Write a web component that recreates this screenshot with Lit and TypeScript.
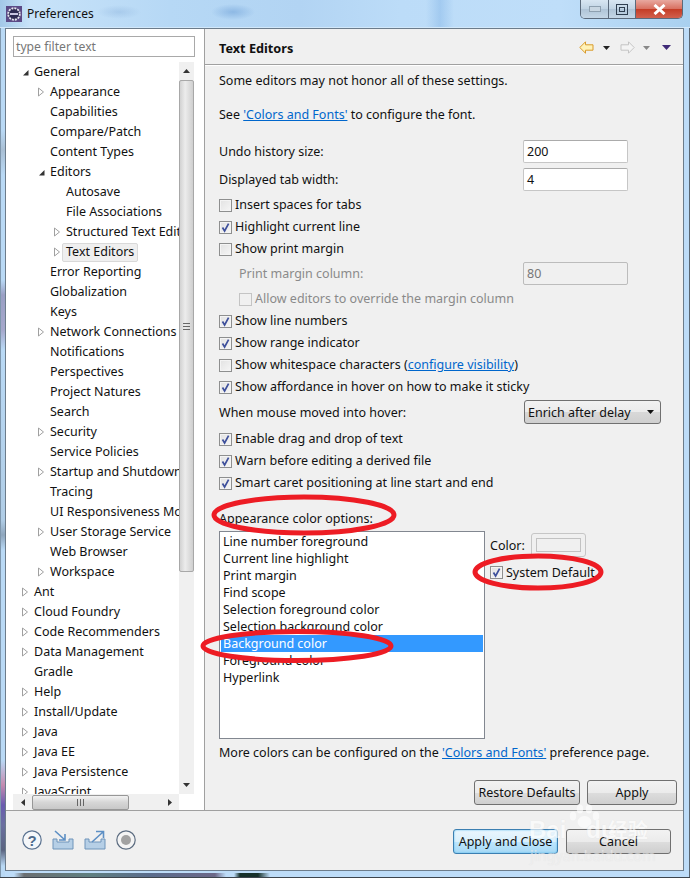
import { LitElement, html, css, svg } from "lit";
import { customElement } from "lit/decorators.js";

type Node = [string, number, "o" | "c" | ""];
const TREE: Node[] = [
  ["General", 0, "o"], ["Appearance", 1, "c"], ["Capabilities", 1, ""], ["Compare/Patch", 1, ""],
  ["Content Types", 1, ""], ["Editors", 1, "o"], ["Autosave", 2, ""], ["File Associations", 2, ""],
  ["Structured Text Editors", 2, "c"], ["Text Editors", 2, "c"], ["Error Reporting", 1, ""],
  ["Globalization", 1, ""], ["Keys", 1, ""], ["Network Connections", 1, "c"], ["Notifications", 1, ""],
  ["Perspectives", 1, ""], ["Project Natures", 1, ""], ["Search", 1, ""], ["Security", 1, "c"],
  ["Service Policies", 1, ""], ["Startup and Shutdown", 1, "c"], ["Tracing", 1, ""],
  ["UI Responsiveness Monitoring", 1, ""], ["User Storage Service", 1, "c"], ["Web Browser", 1, ""],
  ["Workspace", 1, "c"], ["Ant", 0, "c"], ["Cloud Foundry", 0, "c"], ["Code Recommenders", 0, "c"],
  ["Data Management", 0, "c"], ["Gradle", 0, ""], ["Help", 0, "c"], ["Install/Update", 0, "c"],
  ["Java", 0, "c"], ["Java EE", 0, "c"], ["Java Persistence", 0, "c"], ["JavaScript", 0, "c"],
];
const COLORS = ["Line number foreground", "Current line highlight", "Print margin", "Find scope",
  "Selection foreground color", "Selection background color", "Background color", "Foreground color", "Hyperlink"];

const cb = (checked: boolean, disabled = false) => html`<span class="cb ${disabled ? "dis" : ""}">${checked
  ? html`<svg width="11" height="11" viewBox="0 0 11 11"><path d="M2.5 5.5 L4.6 9 L8.6 1.6" fill="none" stroke="#3d4f9b" stroke-width="1.7"/></svg>` : ""}</span>`;

const check = (label: unknown, checked: boolean) => html`<div class="row chk">${cb(checked)}<span>${label}</span></div>`;

@customElement("app-root")
export class AppRoot extends LitElement {
  static styles = css`
    :host { display: block; width: 690px; height: 878px; position: relative; overflow: hidden;
      font-family: "Noto Sans", "Noto Sans CJK SC", sans-serif; font-size: 12.5px; color: #111;
      background: #b4d6f4; }
    * { box-sizing: border-box; }
    .frame { width: 690px; height: 878px; display: flex; flex-direction: column;
      box-shadow: inset -1px 0 #5a6672, inset 1px 0 #7f97ad;
      background:
        linear-gradient(180deg, #b9d9f5 0, #b9d9f5 130px, #a9bfd4 150px, #b9d9f5 175px, #b9d9f5 280px, #9a9fc4 295px, #a6a8cc 330px, #b9d9f5 350px, #b0cde6 520px, #8fa6bd 535px, #b9d9f5 550px, #b9d9f5 760px, #c48bb0 785px, #6a5cb0 805px, #6a6fa0 825px, #5a6480 850px, #b9d9f5 866px) left top / 5px 100% no-repeat,
        #bddcf8; }
    .titlebar { height: 28px; flex: none; display: flex; align-items: flex-start; position: relative;
      border-bottom: 1px solid #d2e8fa;
      background:
        radial-gradient(ellipse 22px 8px at 233px 12px, rgba(110,160,215,.55), transparent),
        radial-gradient(ellipse 22px 7px at 119px 12px, rgba(130,170,215,.35), transparent),
        linear-gradient(90deg, transparent 426px, rgba(130,180,230,.45) 440px, transparent 454px),
        linear-gradient(90deg, #a3c8e8 0, #c8e3f9 30px, #b6d8f5 170px, #b2d4f3 300px, #bcdcf8 400px, #bfdef9 560px, #a9d0ef 100%); }
    .ticon { margin: 6px 0 0 6px; }
    .ttext { margin: 5px 0 0 5px; line-height: 18px; font-size: 12px; color: #111; }
    .winbtns { margin-left: auto; margin-right: 7px; display: flex; height: 19px; border: 1px solid #5b6a7c;
      border-top: none; border-radius: 0 0 5px 5px; overflow: hidden; }
    .wb { height: 18px; display: flex; align-items: center; justify-content: center;
      background: linear-gradient(#d8e6f2, #c0d3e4 50%, #afc4d7 51%, #c4d6e6); border-right: 1px solid #5b6a7c; }
    .wb.min { width: 28px; } .wb.max { width: 27px; }
    .wb.close { width: 46px; border-right: none; background: linear-gradient(#e8a89f, #d86f5f 50%, #c43c26 51%, #d2604d); }
    .client { flex: none; height: 843px; margin-left: 5px; width: 679px; border: 1px solid #6c7c8b;
      background: #f0f0f0; display: flex; flex-direction: column; }
    .main { flex: none; height: 782px; display: flex; border-bottom: 1px solid #a0a0a0; }
    .left { flex: none; width: 199px; background: #fff; border-right: 1px solid #a0a0a0; padding: 7px 10px 0 7px;
      display: flex; flex-direction: column; }
    .filter { flex: none; height: 21px; width: 182px; border: 1px solid #a9a9a9; color: #777; line-height: 19px; padding-left: 2px; font-size: 12.2px; background: #fff; }
    .treebox { flex: none; margin-top: 5px; width: 182px; height: 748px; display: grid; grid-template-columns: 166px 16px; grid-template-rows: 732px 16px; }
    .tree { overflow: hidden; }
    .tn { height: 20px; line-height: 20px; white-space: nowrap; position: relative; display: flex; align-items: center; }
    .tn .arrow { width: 10px; flex: none; display: flex; align-items: center; justify-content: center; margin-right: 4px; }
    .l0 { padding-left: 7px; } .l1 { padding-left: 23px; } .l2 { padding-left: 39px; }
    .sel { background: #efefef; border: 1px solid #d9d9d9; border-radius: 2px; padding: 0 3px; margin-left: -4px; line-height: 16px; height: 19px; }
    .vbar { background: #f0f0f0; display: flex; flex-direction: column; width: 15px; position: relative; }
    .vbtn { height: 18px; flex: none; display: flex; align-items: center; justify-content: center; }
    .vthumb { flex: none; height: 492px; background: linear-gradient(90deg, #d2d2d2, #ececec 40%, #cfcfcf); border: 1px solid #a8a8a8; border-radius: 2px; display: flex; align-items: center; justify-content: center; }
    .vsp { flex: 1; }
    .hbar { background: #f0f0f0; display: flex; align-items: center; height: 16px; }
    .hbtn { width: 19px; flex: none; display: flex; align-items: center; justify-content: center; }
    .hthumb { width: 97px; height: 15px; flex: none; background: linear-gradient(#f2f2f2, #d6d6d6 50%, #c8c8c8); border: 1px solid #979797; border-radius: 2px; display: flex; align-items: center; justify-content: center; }
    .hsp { flex: 1; }
    .corner { background: #fff; }
    .right { flex: 1; min-width: 0; display: flex; flex-direction: column; }
    .head { flex: none; height: 36px; display: flex; align-items: center; padding-left: 14px; border-bottom: 1px solid #a0a0a0; box-shadow: 0 1px 0 #fff; }
    .head b { font-weight: 700; font-size: 12.7px; margin-top: 3px; }
    .tools { margin-left: auto; margin-right: 12px; margin-top: 2px; display: flex; align-items: center; }
    .body { flex: 1; padding: 5px 0 0 14px; display: flex; flex-direction: column; }
    .row { height: 22px; line-height: 22px; display: flex; align-items: center; white-space: nowrap; }
    .chk { gap: 3px; }
    .cb { width: 13px; height: 13px; flex: none; border: 1px solid #8e8f8f; background: linear-gradient(135deg, #e2e2e2, #f6f6f6); box-shadow: inset 0 0 0 1px #f4f4f4; display: inline-flex; align-items: center; justify-content: center; }
    .cb.dis { border-color: #c4c4c4; background: #f0f0f0; box-shadow: none; }
    .see { margin-top: 12px; }
    a { color: #0066cc; text-decoration: underline; }
    .field { height: 23px; display: flex; align-items: center; }
    .field .sp { flex: 1; }
    .input { flex: none; width: 105px; margin-right: 55px; height: 23px; background: #fff; border: 1px solid #c6c6c6; border-top-color: #ababab; border-radius: 2px; line-height: 21px; padding-left: 3px; }
    .f1 { margin-top: 14px; } .f2 { margin-top: 5px; margin-bottom: 3px; }
    .disrow { height: 28px; margin-top: -1px; margin-bottom: 1px; padding-left: 20px; display: flex; align-items: center; color: #8a8a8a; }
    .disrow .sp { flex: 1; }
    .input.dis { background: #f0f0f0; color: #777; border: 1px solid #bcbcbc; border-radius: 2px; }
    .allow { padding-left: 20px; color: #8a8a8a; }
    .combo { height: 30px; margin-top: -1px; margin-bottom: 1px; display: flex; align-items: center; }
    .combo .sp { flex: 1; }
    .select { flex: none; width: 137px; margin-right: 22px; height: 24px; border: 1px solid #707070; border-radius: 3px; background: linear-gradient(#f2f2f2, #ebebeb 50%, #d8d8d8 51%, #cfcfcf); display: flex; align-items: center; padding: 0 6px 0 3px; }
    .select svg { margin-left: auto; }
    .appear { margin-top: 14px; }
    .colors { margin-top: 1px; display: flex; height: 208px; }
    .list { flex: none; width: 266px; height: 208px; background: #fff; border: 1px solid #828790; padding: 1px 1px 0; overflow: hidden; }
    .li { height: 17px; line-height: 17px; padding-left: 2px; white-space: nowrap; }
    .li.on { background: #3399ff; color: #fff; }
    .cside { margin-left: 5px; display: flex; flex-direction: column; }
    .colrow { display: flex; align-items: center; gap: 6px; height: 25px; margin-top: 1px; }
    .colrow span { padding-top: 1px; }
    .swatch { width: 55px; height: 24px; border: 1px solid #c6c6c6; border-radius: 3px; background: #f0f0f0; display: flex; align-items: center; justify-content: center; }
    .swatch i { display: block; width: 45px; height: 14px; background: #f0f0f0; border: 1px solid #c2c2c2; }
    .sysdef { margin-top: 4px; height: 22px; display: flex; align-items: center; gap: 3px; }
    .more { margin-top: 3px; height: 22px; line-height: 22px; }
    .foot { margin-top: 16px; margin-right: 6px; display: flex; justify-content: flex-end; gap: 7px; }
    .btn { height: 25px; display: flex; align-items: center; justify-content: center; border: 1px solid #707070; border-radius: 3px; background: linear-gradient(#f2f2f2, #ebebeb 50%, #dddddd 51%, #cfcfcf); }
    .w106 { width: 106px; } .w90 { width: 90px; } .w105 { width: 105px; }
    .bottom { flex: 1; display: flex; align-items: flex-start; padding: 18px 12px 0 0; }
    .icons { display: flex; gap: 10px; padding-left: 16px; margin-top: 1px; align-items: center; }
    .bsp { flex: 1; }
    .btns { display: flex; gap: 8px; }
    .btn.def { border-color: #3c7fb1; background: linear-gradient(#eaf6fd, #d9f0fc 50%, #bee6fd 51%, #a7d9f5); box-shadow: 0 0 2px #4ab8ef inset; }
    .edge { flex: 1; margin-top: 1px; border-bottom: 1px solid #3d444c;
      background:
        linear-gradient(90deg, transparent 14px, #6b6f72 24px, #5f7f80 90px, #5a6c8c 150px, #6c6888 215px, transparent 226px, transparent 234px, #16302a 240px, #16302a 258px, transparent 270px) left 0 top 1px / 100% 4px no-repeat; }
    .marks { position: absolute; left: 0; top: 0; pointer-events: none; }
    .wm { position: absolute; left: 527px; top: 808px; width: 170px; height: 70px; color: #fff; opacity: .62; pointer-events: none; text-shadow: 0 0 1px #ddd; }
    .wm .baidu { position: absolute; left: 2px; top: 8px; font: 700 24px "Liberation Sans", sans-serif; }
    .wm .jy { position: absolute; left: 81px; top: 9px; font: 700 20px "Noto Sans CJK SC", sans-serif; line-height: 26px; }
    .wm .url { position: absolute; left: 3px; top: 37px; font: 14.5px "Noto Sans", sans-serif; color: #eee; }
    .wm svg { position: absolute; left: 42px; top: -4px; }
  `;

  private arrow(k: string) {
    if (k === "o") return html`<svg width="7" height="7" viewBox="0 0 7 7"><path d="M6.5 1 V6.5 H1 Z" fill="#333"/></svg>`;
    if (k === "c") return html`<svg width="6" height="10" viewBox="0 0 6 10"><path d="M.5 1 L5.5 5 L.5 9 Z" fill="#fff" stroke="#a0a0a0"/></svg>`;
    return "";
  }

  render() {
    return html`
    <div class="frame">
      <div class="titlebar">
        <svg class="ticon" width="16" height="16" viewBox="0 0 16 16"><rect width="16" height="16" fill="#5b4a86"/><circle cx="8" cy="8" r="5.8" fill="#2e2a52" stroke="#e6e6ee" stroke-width="1.8" stroke-dasharray="2 1"/><rect x="4" y="7" width="8" height="2" fill="#c8c4e0"/></svg>
        <span class="ttext">Preferences</span>
        <div class="winbtns">
          <div class="wb min"><svg width="12" height="6"><rect x=".5" y=".5" width="11" height="5" fill="#c8d6e2" stroke="#8ea0b0"/></svg></div>
          <div class="wb max"><svg width="12" height="11"><rect x=".5" y=".5" width="11" height="10" fill="none" stroke="#2f3e50"/><rect x="3.5" y="3.5" width="5" height="4" fill="none" stroke="#2f3e50"/></svg></div>
          <div class="wb close"><svg width="13" height="11" viewBox="0 0 13 11"><path d="M1.5 1 L11.5 10 M11.5 1 L1.5 10" stroke="#fff" stroke-width="3"/></svg></div>
        </div>
      </div>
      <div class="client">
        <div class="main">
          <div class="left">
            <div class="filter">type filter text</div>
            <div class="treebox">
              <div class="tree">
                ${TREE.map(([t, l, k]) => html`<div class="tn ${"l" + l}"><span class="arrow">${this.arrow(k)}</span><span class="${t === "Text Editors" ? "sel" : ""}">${t}</span></div>`)}
              </div>
              <div class="vbar">
                <div class="vbtn"><svg width="7" height="4"><path d="M0 4 L3.5 0 L7 4 Z" fill="#333"/></svg></div>
                <div class="vthumb"><svg width="7" height="7"><path d="M0 .5 H7 M0 3.5 H7 M0 6.5 H7" stroke="#666"/></svg></div>
                <div class="vsp"></div>
                <div class="vbtn"><svg width="7" height="4"><path d="M0 0 L3.5 4 L7 0 Z" fill="#333"/></svg></div>
              </div>
              <div class="hbar">
                <div class="hbtn"><svg width="4" height="7"><path d="M4 0 L0 3.5 L4 7 Z" fill="#333"/></svg></div>
                <div class="hthumb"><svg width="7" height="7"><path d="M.5 0 V7 M3.5 0 V7 M6.5 0 V7" stroke="#666"/></svg></div>
                <div class="hsp"></div>
                <div class="hbtn"><svg width="4" height="7"><path d="M0 0 L4 3.5 L0 7 Z" fill="#333"/></svg></div>
              </div>
              <div class="corner"></div>
            </div>
          </div>
          <div class="right">
            <div class="head"><b>Text Editors</b>
              <div class="tools">
                <svg width="15" height="13" viewBox="0 0 15 13"><path d="M.8 6.5 L6.5 .8 V3.8 H14 V9.2 H6.5 V12.2 Z" fill="#fff2b8" stroke="#d89a2c"/></svg>
                <svg style="margin-left:9px" width="7" height="4"><path d="M0 0 H7 L3.5 4 Z" fill="#222"/></svg>
                <svg style="margin-left:10px" width="15" height="13" viewBox="0 0 15 13"><path d="M14.2 6.5 L8.5 .8 V3.8 H1 V9.2 H8.5 V12.2 Z" fill="#f4f4f4" stroke="#c4c4c4"/></svg>
                <svg style="margin-left:8px" width="7" height="4"><path d="M0 0 H7 L3.5 4 Z" fill="#888"/></svg>
                <svg style="margin-left:12px" width="9" height="5"><path d="M0 0 H9 L4.5 5 Z" fill="#3f2a78"/></svg>
              </div>
            </div>
            <div class="body">
              <div class="row">Some editors may not honor all of these settings.</div>
              <div class="row see">See&nbsp;<a>'Colors and Fonts'</a>&nbsp;to configure the font.</div>
              <div class="field f1"><span>Undo history size:</span><span class="sp"></span><div class="input">200</div></div>
              <div class="field f2"><span>Displayed tab width:</span><span class="sp"></span><div class="input">4</div></div>
              ${check("Insert spaces for tabs", false)}
              ${check("Highlight current line", true)}
              ${check("Show print margin", false)}
              <div class="disrow"><span>Print margin column:</span><span class="sp"></span><div class="input dis">80</div></div>
              <div class="row chk allow">${cb(false, true)}<span>Allow editors to override the margin column</span></div>
              ${check("Show line numbers", true)}
              ${check("Show range indicator", true)}
              ${check(html`Show whitespace characters (<a>configure visibility</a>)`, false)}
              ${check("Show affordance in hover on how to make it sticky", true)}
              <div class="combo"><span>When mouse moved into hover:</span><span class="sp"></span>
                <div class="select">Enrich after delay<svg width="7" height="4"><path d="M0 0 H7 L3.5 4 Z" fill="#111"/></svg></div></div>
              ${check("Enable drag and drop of text", true)}
              ${check("Warn before editing a derived file", true)}
              ${check("Smart caret positioning at line start and end", true)}
              <div class="row appear">Appearance color options:</div>
              <div class="colors">
                <div class="list">${COLORS.map(c => html`<div class="li ${c === "Background color" ? "on" : ""}">${c}</div>`)}</div>
                <div class="cside">
                  <div class="colrow"><span>Color:</span><div class="swatch"><i></i></div></div>
                  <div class="sysdef">${cb(true)}<span>System Default</span></div>
                </div>
              </div>
              <div class="more">More colors can be configured on the <a>'Colors and Fonts'</a> preference page.</div>
              <div class="foot"><div class="btn w106">Restore Defaults</div><div class="btn w90">Apply</div></div>
            </div>
          </div>
        </div>
        <div class="bottom">
          <div class="icons">
            <svg width="20" height="20" viewBox="0 0 20 20"><circle cx="10" cy="10" r="9.2" fill="#f4f7fa" stroke="#5a7290" stroke-width="1.2"/><text x="10" y="15.5" text-anchor="middle" font-family="Liberation Sans" font-weight="700" font-size="15" fill="#4d6a8c">?</text></svg>
            <svg width="22" height="20" viewBox="0 0 22 20"><path d="M1 9 V19 H21 V9 H17 V12 H5 V9 Z" fill="#b6cfe6" stroke="#6f94ba"/><path d="M3 1 L13 10 M13 4 V10 H7" fill="none" stroke="#5d8fc4" stroke-width="1.6"/></svg>
            <svg width="22" height="20" viewBox="0 0 22 20"><path d="M1 9 V19 H21 V9 H17 V12 H5 V9 Z" fill="#b6cfe6" stroke="#6f94ba"/><path d="M8 12 L19 2 M12 1.5 H19.5 V8" fill="none" stroke="#5d8fc4" stroke-width="1.6"/></svg>
            <svg width="20" height="20" viewBox="0 0 20 20"><circle cx="10" cy="10" r="9.2" fill="#f4f4f4" stroke="#5c6c80" stroke-width="1.2"/><circle cx="10" cy="10" r="5" fill="#a2a2a2"/></svg>
          </div>
          <span class="bsp"></span>
          <div class="btns"><div class="btn def w105">Apply and Close</div><div class="btn w105">Cancel</div></div>
        </div>
      </div>
      <div class="edge"></div>
    </div>
    <svg class="marks" width="690" height="878" fill="none" stroke="#ed1c24" stroke-width="5">
      ${svg`<ellipse cx="304" cy="515" rx="90" ry="18"/>
      <ellipse cx="538" cy="572" rx="63" ry="16"/>
      <ellipse cx="297" cy="646" rx="94" ry="14.5"/>`}
    </svg>
    <div class="wm">
      <svg width="32" height="26" viewBox="0 0 32 26" fill="#fff"><ellipse cx="4" cy="12" rx="3.2" ry="4.5"/><ellipse cx="11" cy="5" rx="3.2" ry="4.5"/><ellipse cx="20" cy="5" rx="3.2" ry="4.5"/><ellipse cx="27" cy="12" rx="3.2" ry="4.5"/><ellipse cx="15.5" cy="18" rx="7" ry="6"/></svg>
      <span class="baidu">Bai&nbsp;&nbsp;&nbsp;du</span><span class="jy">经验</span><span class="url">jingyan.baidu.com</span>
    </div>`;
  }
}
